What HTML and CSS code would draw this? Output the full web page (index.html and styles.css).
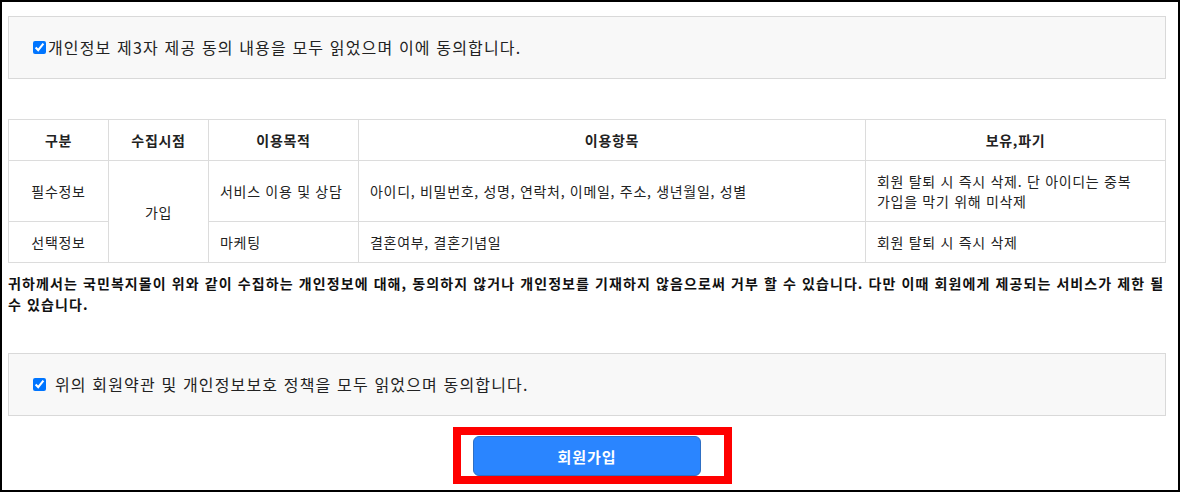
FILE: index.html
```html
<!DOCTYPE html>
<html lang="ko">
<head>
<meta charset="utf-8">
<title>회원가입 동의</title>
<link rel="stylesheet" href="styles.css">
</head>
<body>
<div class="page">
  <div class="agree-box">
    <label class="agree"><input type="checkbox" class="chk" checked><span class="agree-text tight">개인정보 제3자 제공 동의 내용을 모두 읽었으며 이에 동의합니다.</span></label>
  </div>

  <table class="info-table">
    <colgroup>
      <col class="c1"><col class="c2"><col class="c3"><col class="c4"><col class="c5">
    </colgroup>
    <thead>
      <tr><th>구분</th><th>수집시점</th><th>이용목적</th><th>이용항목</th><th>보유,파기</th></tr>
    </thead>
    <tbody>
      <tr>
        <td class="center">필수정보</td>
        <td class="center" rowspan="2">가입</td>
        <td>서비스 이용 및 상담</td>
        <td>아이디, 비밀번호, 성명, 연락처, 이메일, 주소, 생년월일, 성별</td>
        <td>회원 탈퇴 시 즉시 삭제. 단 아이디는 중복 가입을 막기 위해 미삭제</td>
      </tr>
      <tr>
        <td class="center">선택정보</td>
        <td>마케팅</td>
        <td>결혼여부, 결혼기념일</td>
        <td>회원 탈퇴 시 즉시 삭제</td>
      </tr>
    </tbody>
  </table>

  <p class="notice">귀하께서는 국민복지몰이 위와 같이 수집하는 개인정보에 대해, 동의하지 않거나 개인정보를 기재하지 않음으로써 거부 할 수 있습니다. 다만 이때 회원에게 제공되는 서비스가 제한 될 수 있습니다.</p>

  <div class="agree-box second">
    <label class="agree"><input type="checkbox" class="chk" checked><span class="agree-text spaced">위의 회원약관 및 개인정보보호 정책을 모두 읽었으며 동의합니다.</span></label>
  </div>

  <div class="submit-row">
    <div class="highlight">
      <button type="button" class="join-btn">회원가입</button>
    </div>
  </div>
</div>
</body>
</html>
```

FILE: styles.css
```css
html, body {
  margin: 0;
  padding: 0;
  background: #fff;
}

body {
  font-family: "Noto Sans CJK KR", "Noto Sans", sans-serif;
  color: #222;
}

.page {
  width: 1180px;
  height: 492px;
  box-sizing: border-box;
  border: 2px solid #000;
  padding: 14px 12px 0 6px;
  overflow: hidden;
}

.agree-box {
  border: 1px solid #d9d9d9;
  background: #f8f8f8;
  padding: 20px 24px;
  height: 21px;
}

.agree-box.second {
  margin-top: 38px;
}

.agree {
  display: flex;
  align-items: center;
  height: 21px;
  font-size: 16px;
  letter-spacing: 1.15px;
  line-height: 21px;
  color: #222;
}

.chk {
  width: 13px;
  height: 13px;
  margin: 0;
  flex: none;
}

.agree-text.tight {
  margin-left: 2px;
}

.agree-text.spaced {
  margin-left: 9px;
}

.info-table {
  width: 100%;
  margin-top: 40px;
  border-collapse: collapse;
  font-size: 14px;
  letter-spacing: 0.7px;
  line-height: 20px;
  color: #222;
  word-break: keep-all;
}

.info-table .c1 { width: 100px; }
.info-table .c2 { width: 100px; }
.info-table .c3 { width: 150px; }
.info-table .c4 { width: 507px; }
.info-table .c5 { width: 300px; }

.info-table th,
.info-table td {
  border: 1px solid #dcdcdc;
  padding: 10px 11px;
  vertical-align: middle;
}

.info-table th {
  font-weight: bold;
  text-align: center;
}

.info-table td {
  text-align: left;
}

.info-table td.center {
  text-align: center;
}

.notice {
  margin: 10px 0 0;
  font-size: 14px;
  letter-spacing: 1.1px;
  font-weight: bold;
  line-height: 21px;
  color: #111;
  word-break: keep-all;
}

.submit-row {
  margin-top: 11px;
  text-align: center;
}

.highlight {
  display: inline-block;
  border: 8px solid #ff0000;
  padding: 1px 23px 0 12px;
  margin-left: 11px;
  vertical-align: top;
}

.join-btn {
  display: block;
  width: 228px;
  height: 40px;
  border: 1px solid #2e6fc4;
  border-radius: 6px;
  background: #2a85ff;
  color: #fff;
  font-family: "Noto Sans CJK KR", "Noto Sans", sans-serif;
  font-size: 15px;
  letter-spacing: 1px;
  font-weight: bold;
  padding: 0;
}
```
